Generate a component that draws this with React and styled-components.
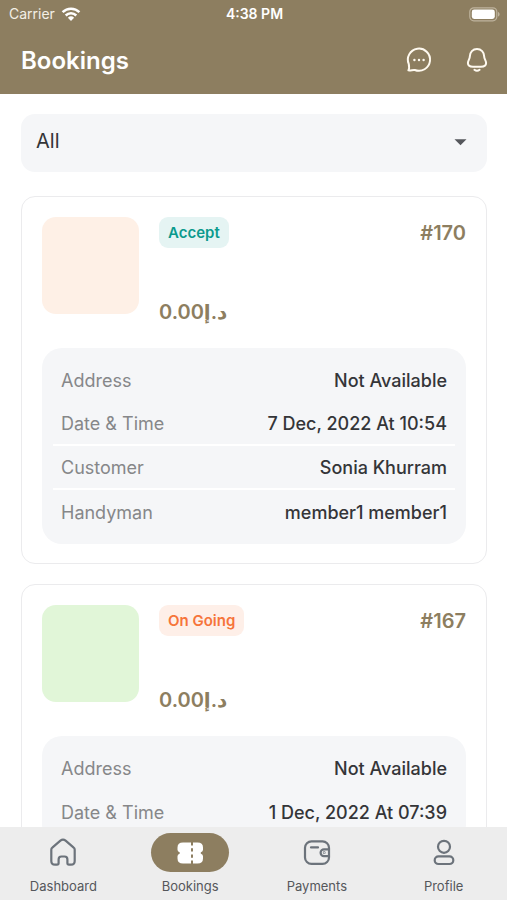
import React from "react";
import styled, { createGlobalStyle } from "styled-components";

const brand = "#8d7e60";

const GlobalStyle = createGlobalStyle`
  *, *::before, *::after { box-sizing: border-box; }
  body {
    margin: 0;
    background: #ffffff;
    color: #343538;
    font-family: Inter, "Liberation Sans", "DejaVu Sans", sans-serif;
  }
  button, select { font: inherit; color: inherit; }
`;

const Screen = styled.div`
  display: flex;
  flex-direction: column;
  height: 100vh;
`;

const Header = styled.header`
  flex: none;
  background: ${brand};
  color: #ffffff;
`;

const StatusBar = styled.div`
  display: grid;
  grid-template-columns: 1fr auto 1fr;
  align-items: center;
  height: 28px;
  padding: 0 7px 0 9px;
  font-size: 14px;
  line-height: 20px;
`;

const Carrier = styled.div`
  display: flex;
  align-items: center;
  gap: 6px;
  color: #f3efe6;
`;

const Clock = styled.time`
  font-weight: 600;
`;

const BatterySlot = styled.div`
  display: flex;
  justify-content: flex-end;
`;

const TitleBar = styled.div`
  display: flex;
  align-items: center;
  justify-content: space-between;
  height: 66px;
  padding: 0 16px 0 21px;
`;

const Title = styled.h1`
  margin: 0;
  font-size: 24px;
  font-weight: 600;
  line-height: 32px;
`;

const Actions = styled.div`
  display: flex;
  gap: 30px;
  padding-bottom: 2px;
`;

const IconButton = styled.button`
  display: grid;
  place-items: center;
  width: 28px;
  height: 28px;
  padding: 0;
  border: 0;
  background: none;
  color: #fffaf0;
  cursor: pointer;
`;

const Content = styled.main`
  flex: 1;
  min-height: 0;
  overflow-y: auto;
  scrollbar-width: none;
  padding: 20px 20px 20px 21px;
`;

const Filter = styled.label`
  display: grid;
  align-items: center;
  margin-bottom: 24px;

  & > * { grid-area: 1 / 1; }
  & > svg { justify-self: end; margin-right: 20px; pointer-events: none; }
`;

const FilterSelect = styled.select`
  appearance: none;
  width: 100%;
  height: 58px;
  padding: 0 48px 4px 15px;
  border: 0;
  border-radius: 14px;
  background: #f5f6f8;
  font-size: 20px;
`;

const BookingList = styled.div`
  display: flex;
  flex-direction: column;
  gap: 20px;
`;

const Card = styled.article`
  padding: 20px 20px 19px;
  border: 1px solid #ebebed;
  border-radius: 14px;
  background: #ffffff;
`;

const Summary = styled.div`
  display: flex;
  gap: 20px;
  margin-bottom: 20px;
`;

const Thumbnail = styled.div`
  width: 97px;
  height: 97px;
  border-radius: 14px;
  background: ${(p) => p.$tint};
`;

const SummaryText = styled.div`
  flex: 1;
  display: flex;
  flex-direction: column;
  justify-content: space-between;
  height: 111px;
`;

const SummaryTop = styled.div`
  display: flex;
  align-items: center;
  justify-content: space-between;
`;

const Badge = styled.span`
  padding: 5px 9px;
  border-radius: 9px;
  background: ${(p) => p.$background};
  color: ${(p) => p.$color};
  font-size: 15px;
  font-weight: 600;
  line-height: 21px;
`;

const BookingId = styled.span`
  color: ${brand};
  font-size: 20px;
  font-weight: 600;
  line-height: 28px;
`;

const Price = styled.span`
  color: ${brand};
  font-size: 20px;
  font-weight: 600;
  line-height: 32px;
`;

const Details = styled.dl`
  margin: 0;
  padding: 10px 11px;
  border-radius: 20px;
  background: #f5f6f8;
`;

const DetailRow = styled.div`
  display: flex;
  align-items: center;
  justify-content: space-between;
  height: 44px;
  padding: 0 8px;

  &:nth-child(n + 2):not(:last-child) { border-bottom: 2px solid #ffffff; }
`;

const Term = styled.dt`
  color: #868789;
  font-size: 18px;
`;

const Value = styled.dd`
  margin: 0;
  font-size: 18px;
  font-weight: 500;
`;

const TabBar = styled.nav`
  flex: none;
  display: grid;
  grid-template-columns: repeat(4, 1fr);
  height: 73px;
  padding-top: 6px;
  background: #ededed;
`;

const Tab = styled.a`
  display: flex;
  flex-direction: column;
  align-items: center;
  gap: 5px;
  color: #55575b;
  font-size: 13px;
  line-height: 18px;
  text-decoration: none;
`;

const TabIcon = styled.span`
  display: grid;
  place-items: center;
  width: 78px;
  height: 39px;
  border-radius: 20px;
  background: ${(p) => (p.$active ? brand : "transparent")};
  color: ${(p) => (p.$active ? "#ffffff" : "#6c737b")};
`;

const WifiIcon = () => (
  <svg width="20" height="15" viewBox="0 0 20 15" fill="none" stroke="#fff" strokeWidth="2.5" aria-hidden="true">
    <path d="M1.6 5.1a12 12 0 0 1 16.8 0" />
    <path d="M4.7 8.5a7.6 7.6 0 0 1 10.6 0" />
    <path d="M10 14l-3.1-3.2a4.5 4.5 0 0 1 6.2 0z" fill="#fff" stroke="none" />
  </svg>
);

const BatteryIcon = () => (
  <svg width="31" height="15" viewBox="0 0 31 15" aria-hidden="true">
    <rect x="0.8" y="0.8" width="27" height="13" rx="4" fill="none" stroke="#beb39d" strokeWidth="1.2" />
    <rect x="2.8" y="2.6" width="23" height="9.4" rx="2.4" fill="#fff" />
    <path d="M29 5v4.6c1.1-.4 1.6-1.2 1.6-2.3S30.1 5.4 29 5z" fill="#beb39d" />
  </svg>
);

const ChatIcon = () => (
  <svg width="28" height="28" viewBox="0 0 28 28" fill="none" stroke="currentColor" strokeWidth="2" strokeLinejoin="round" aria-hidden="true">
    <path d="M3.4 24.4C4.6 22.8 4.3 21 3.8 18.2A11.1 11.1 0 1 1 9.8 24C8 23.4 5.600 25 3.4 24.4z" />
    <g fill="currentColor" stroke="none">
      <circle cx="9.4" cy="14" r="1.200" />
      <circle cx="14" cy="14" r="1.200" />
      <circle cx="18.600" cy="14" r="1.200" />
    </g>
  </svg>
);

const BellIcon = () => (
  <svg width="28" height="28" viewBox="0 0 28 28" fill="none" stroke="currentColor" strokeWidth="2" strokeLinecap="round" aria-hidden="true">
    <path d="M14 3C9.700 3 7 6.200 6.900 10C6.800 13.400 4.900 14.300 4.900 17.100C4.900 20 7.600 20.800 10 20.800H18C20.400 20.800 23.100 20 23.100 17.100C23.100 14.300 21.200 13.400 21.100 10C21 6.200 18.300 3 14 3z" />
    <path d="M11.400 23.800c1.500 1.200 3.700 1.200 5.200 0" />
  </svg>
);

const CaretIcon = () => (
  <svg width="13" height="8" viewBox="0 0 13 8" aria-hidden="true">
    <path d="M0.500 0.300h12l-6 6z" fill="#55575c" />
  </svg>
);

const HomeIcon = () => (
  <svg width="30" height="30" viewBox="0 1 30 30" fill="none" stroke="currentColor" strokeWidth="2.200" strokeLinejoin="round" aria-hidden="true">
    <path d="M4.300 10.600Q3.300 11.300 3.300 12.700V24Q3.300 27.700 7 27.700H9Q10.600 27.700 10.600 26V22.500Q10.600 19.500 13.400 19.500H16.600Q19.400 19.500 19.400 22.500V26Q19.400 27.700 21 27.700H23Q26.700 27.700 26.700 24V12.700Q26.700 11.300 25.700 10.600L17.600 3.700Q15 1.700 12.400 3.700Z" />
  </svg>
);

const TicketIcon = () => (
  <svg width="28" height="24" viewBox="0 0 28 24" aria-hidden="true">
    <path
      fill="currentColor"
      d="M7 1.500H15V4.500H17V1.500H21.500Q27 1.500 27 6.500V8.800Q27 10.500 25 11.200Q24.200 12 25 12.800Q27 13.500 27 15.200V17.500Q27 22.500 21.500 22.500H17V19.500H15V22.500H7Q1.500 22.500 1.500 17.500V15.200Q1.500 13.500 3.500 12.800Q4.300 12 3.500 11.200Q1.500 10.500 1.500 8.800V6.500Q1.500 1.500 7 1.500z"
    />
    <path d="M16 7.200v3.300M16 13.500v3.300" stroke={brand} strokeWidth="2" />
  </svg>
);

const WalletIcon = () => (
  <svg width="28" height="28" viewBox="0 1 28 28" fill="none" stroke="currentColor" strokeWidth="2.200" strokeLinecap="round" aria-hidden="true">
    <rect x="2" y="3.300" width="24" height="22.600" rx="6.500" />
    <path d="M8 9.400h7" />
    <path d="M26 11.300h-5a3.400 3.400 0 0 0 0 6.800H26" />
    <circle cx="21.200" cy="14.700" r="0.300" />
  </svg>
);

const ProfileIcon = () => (
  <svg width="28" height="28" viewBox="0 1 28 28" fill="none" stroke="currentColor" strokeWidth="2.200" aria-hidden="true">
    <circle cx="14" cy="8.800" r="6" />
    <rect x="4.700" y="18.400" width="18.600" height="7.600" rx="3.800" />
  </svg>
);

const bookings = [
  {
    id: "#170",
    status: "Accept",
    statusColor: "#0b9a8d",
    statusBackground: "#e5f4f3",
    tint: "#fef0e6",
    details: [
      ["Address", "Not Available"],
      ["Date & Time", "7 Dec, 2022 At 10:54"],
      ["Customer", "Sonia Khurram"],
      ["Handyman", "member1 member1"],
    ],
  },
  {
    id: "#167",
    status: "On Going",
    statusColor: "#f6743a",
    statusBackground: "#feefe8",
    tint: "#e1f6d8",
    details: [
      ["Address", "Not Available"],
      ["Date & Time", "1 Dec, 2022 At 07:39"],
    ],
  },
];

const tabs = [
  { label: "Dashboard", Icon: HomeIcon },
  { label: "Bookings", Icon: TicketIcon, active: true },
  { label: "Payments", Icon: WalletIcon },
  { label: "Profile", Icon: ProfileIcon },
];

function BookingCard({ booking }) {
  return (
    <Card>
      <Summary>
        <Thumbnail $tint={booking.tint} />
        <SummaryText>
          <SummaryTop>
            <Badge $color={booking.statusColor} $background={booking.statusBackground}>
              {booking.status}
            </Badge>
            <BookingId>{booking.id}</BookingId>
          </SummaryTop>
          <Price>0.00د.إ</Price>
        </SummaryText>
      </Summary>
      <Details>
        {booking.details.map(([term, value]) => (
          <DetailRow key={term}>
            <Term>{term}</Term>
            <Value>{value}</Value>
          </DetailRow>
        ))}
      </Details>
    </Card>
  );
}

export default function App() {
  return (
    <Screen>
      <GlobalStyle />
      <Header>
        <StatusBar>
          <Carrier>
            Carrier
            <WifiIcon />
          </Carrier>
          <Clock>4:38 PM</Clock>
          <BatterySlot>
            <BatteryIcon />
          </BatterySlot>
        </StatusBar>
        <TitleBar>
          <Title>Bookings</Title>
          <Actions>
            <IconButton type="button" aria-label="Messages">
              <ChatIcon />
            </IconButton>
            <IconButton type="button" aria-label="Notifications">
              <BellIcon />
            </IconButton>
          </Actions>
        </TitleBar>
      </Header>
      <Content>
        <Filter>
          <FilterSelect aria-label="Booking status" defaultValue="All">
            <option>All</option>
          </FilterSelect>
          <CaretIcon />
        </Filter>
        <BookingList>
          {bookings.map((booking) => (
            <BookingCard key={booking.id} booking={booking} />
          ))}
        </BookingList>
      </Content>
      <TabBar aria-label="Main">
        {tabs.map(({ label, Icon, active }) => (
          <Tab key={label} href={"#" + label.toLowerCase()} aria-current={active ? "page" : undefined}>
            <TabIcon $active={active}>
              <Icon />
            </TabIcon>
            {label}
          </Tab>
        ))}
      </TabBar>
    </Screen>
  );
}
